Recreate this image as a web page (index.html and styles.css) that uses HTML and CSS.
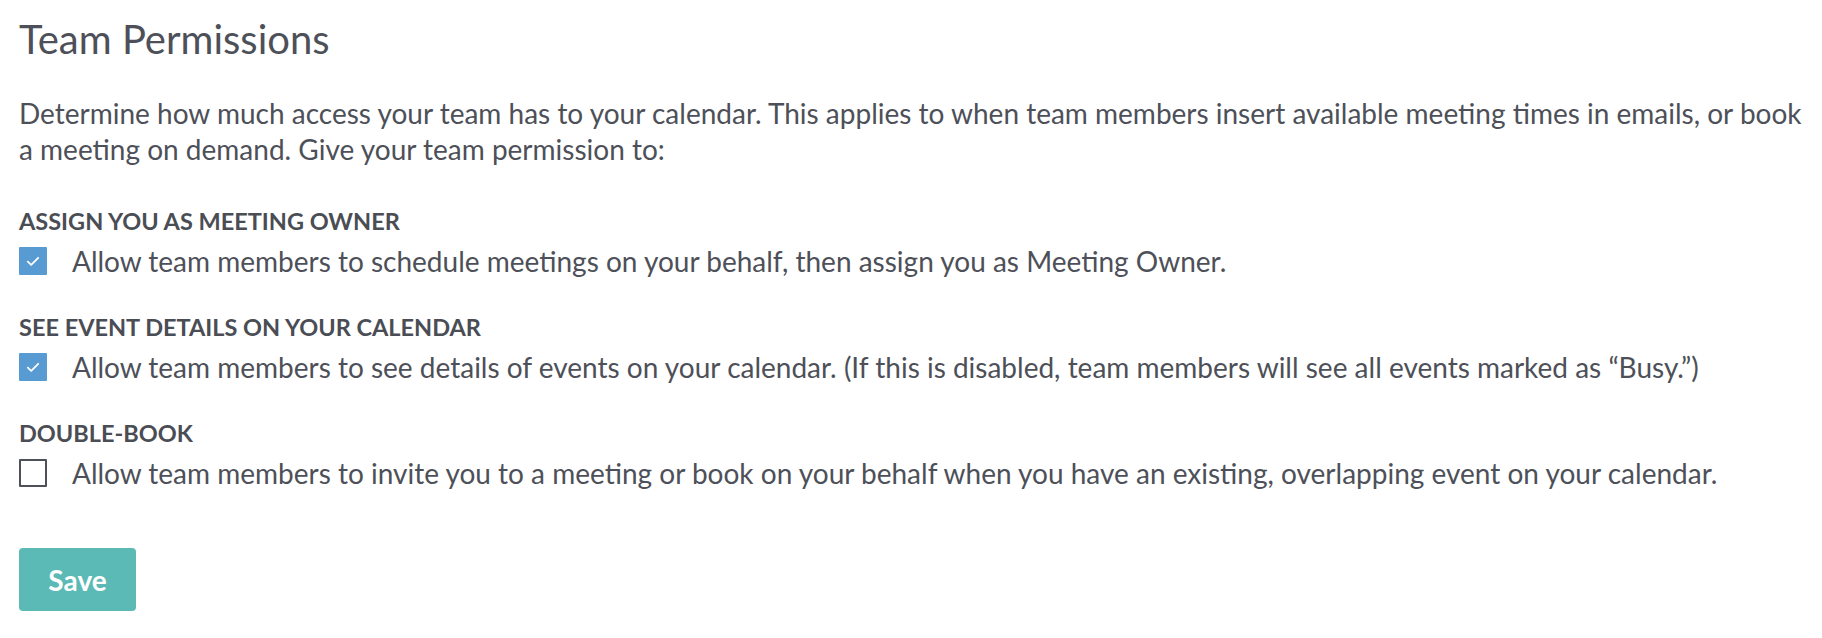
FILE: index.html
```html
<!DOCTYPE html>
<html lang="en">
<head>
<meta charset="utf-8">
<title>Team Permissions</title>
<link rel="stylesheet" href="styles.css">
</head>
<body>
<main class="page">
  <h1 class="title">Team Permissions</h1>
  <p class="intro">Determine how much access your team has to your calendar. This applies to when team members insert available meeting times in emails, or book a meeting on demand. Give your team permission to:</p>

  <section class="perm">
    <h2 class="perm-title">ASSIGN YOU AS MEETING OWNER</h2>
    <label class="check-row">
      <span class="box box-on"><svg viewBox="0 0 28 28" width="28" height="28"><path d="M8.8 14.6 L12.2 17.8 L19.2 10.8" fill="none" stroke="#fff" stroke-width="1.8" stroke-linecap="round" stroke-linejoin="round"/></svg></span>
      <span class="check-text">Allow team members to schedule meetings on your behalf, then assign you as Meeting Owner.</span>
    </label>
  </section>

  <section class="perm">
    <h2 class="perm-title">SEE EVENT DETAILS ON YOUR CALENDAR</h2>
    <label class="check-row">
      <span class="box box-on"><svg viewBox="0 0 28 28" width="28" height="28"><path d="M8.8 14.6 L12.2 17.8 L19.2 10.8" fill="none" stroke="#fff" stroke-width="1.8" stroke-linecap="round" stroke-linejoin="round"/></svg></span>
      <span class="check-text">Allow team members to see details of events on your calendar. (If this is disabled, team members will see all events marked as “Busy.”)</span>
    </label>
  </section>

  <section class="perm">
    <h2 class="perm-title">DOUBLE-BOOK</h2>
    <label class="check-row">
      <span class="box box-off"></span>
      <span class="check-text">Allow team members to invite you to a meeting or book on your behalf when you have an existing, overlapping event on your calendar.</span>
    </label>
  </section>

  <button class="save" type="button">Save</button>
</main>
</body>
</html>
```
FILE: styles.css
```css
html, body {
  margin: 0;
  padding: 0;
  background: #ffffff;
}

.page {
  font-family: "Lato", "Open Sans", sans-serif;
  color: #4d5058;
  padding: 15px 0 0 19px;
  display: flex;
  flex-direction: column;
  align-items: flex-start;
}

.title {
  margin: 0;
  font-size: 40px;
  font-weight: 400;
  line-height: 48px;
  color: #4d5058;
}

.intro {
  margin: 32px 0 0;
  font-size: 28px;
  line-height: 36px;
  max-width: 1800px;
}

.perm {
  margin-top: 39px;
}

.perm + .perm {
  margin-top: 33px;
}

.perm-title {
  margin: 0;
  font-size: 23.5px;
  font-weight: 700;
  line-height: 30px;
  color: #4a4d54;
}

.check-row {
  margin-top: 7px;
  display: flex;
  align-items: center;
  gap: 25px;
  height: 36px;
}

.box {
  flex: none;
  width: 28px;
  height: 28px;
  box-sizing: border-box;
  border-radius: 1px;
  display: flex;
  align-items: center;
  justify-content: center;
}

.box svg {
  display: block;
}

.box-on {
  background: #589ad2;
}

.box-off {
  background: #fff;
  border: 2px solid #4d5058;
}

.check-text {
  font-size: 28px;
  line-height: 36px;
}

.save {
  margin-top: 57px;
  width: 117px;
  height: 63px;
  border: 0;
  border-radius: 4px;
  background: #5bbab5;
  color: #ffffff;
  font-family: "Lato", "Open Sans", sans-serif;
  font-size: 28px;
  font-weight: 700;
  padding: 0;
  cursor: pointer;
}
```
